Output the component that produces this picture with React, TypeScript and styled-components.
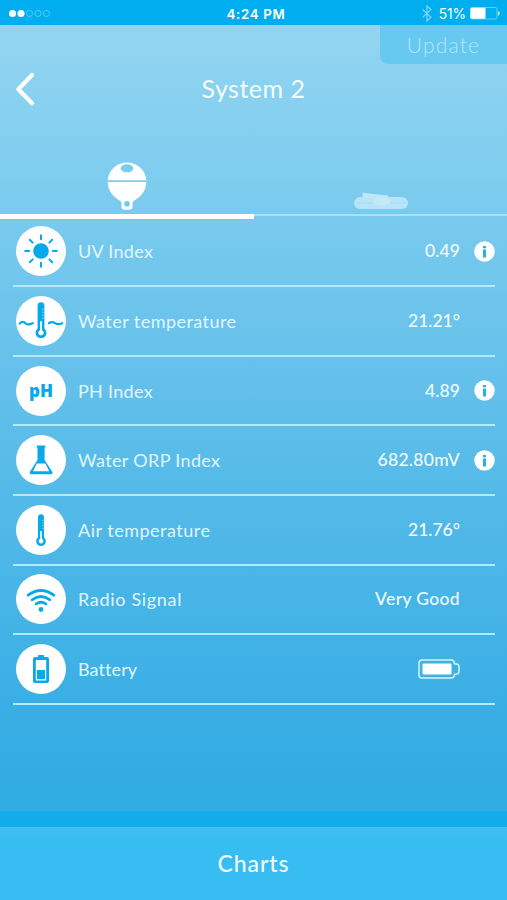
import React from "react";
import styled, { createGlobalStyle } from "styled-components";

const BLUE = "#08a9ea";

const GlobalStyle = createGlobalStyle`
  * { box-sizing: border-box; }
  body { margin: 0; font-family: Lato, "Open Sans", sans-serif; color: #fff; }
`;

const Screen = styled.main`
  width: 507px;
  height: 900px;
  display: flex;
  flex-direction: column;
  overflow: hidden;
  background: linear-gradient(#93d5f1 25px, #7bcbee 200px, #5abce9 450px, #3aafe5 700px, #30abe3 811px);
`;

const StatusBar = styled.header`
  height: 25px;
  flex: none;
  display: grid;
  grid-template-columns: 1fr auto 1fr;
  align-items: center;
  padding: 2px 7px 0 8px;
  background: #00aeef;
  font-family: Inter, sans-serif;
`;

const Clock = styled.span`
  font-size: 13.3px;
  font-weight: 600;
  letter-spacing: 0.7px;
  padding-left: 4px;
`;

const StatusRight = styled.div`
  display: flex;
  align-items: center;
  justify-content: flex-end;
  font-size: 13.8px;
  letter-spacing: -0.1px;
`;

const Percent = styled.span`
  margin: 0 4px 0 7px;
`;

const NavBar = styled.div`
  position: relative;
  height: 129px;
  flex: none;
  display: flex;
  align-items: flex-start;
  justify-content: center;
  padding-top: 46px;
`;

const Title = styled.h1`
  margin: 0;
  font-size: 25px;
  line-height: 34px;
  font-weight: 400;
  letter-spacing: 0.5px;
  color: #f3fcff;
`;

const BackButton = styled.button`
  position: absolute;
  left: 14px;
  top: 46px;
  padding: 0;
  border: 0;
  background: none;
  line-height: 0;
`;

const UpdateButton = styled.button`
  position: absolute;
  right: 0;
  top: 0;
  width: 127px;
  height: 39px;
  padding: 0;
  border: 0;
  border-radius: 0 0 0 8px;
  background: #67c9f0;
  color: #b4e7fa;
  font: 300 21px/36px Lato, sans-serif;
  letter-spacing: 1.2px;
`;

const Tabs = styled.nav`
  height: 65px;
  flex: none;
  display: grid;
  grid-template-columns: 254px 1fr;
`;

const Tab = styled.div<{ $active?: boolean }>`
  display: flex;
  align-items: flex-end;
  justify-content: center;
  height: ${(p) => (p.$active ? "65px" : "62px")};
  padding-bottom: ${(p) => (p.$active ? "4px" : "4px")};
  border-bottom: ${(p) => (p.$active ? "5px solid #fff" : "2px solid #a9e1f8")};
`;

const Readings = styled.ul`
  margin: -1.4px 12px 0 13px;
  padding: 0;
  list-style: none;
  flex: 1;
`;

const Reading = styled.li`
  height: 69.6px;
  display: grid;
  grid-template-columns: 50px 1fr auto 35px;
  align-items: center;
  padding-left: 3px;
  border-bottom: 2px solid #b5e9fd;
`;

const Disc = styled.div`
  width: 50px;
  height: 50px;
  border-radius: 50%;
  background: #fff;
  display: grid;
  place-items: center;
`;

const Label = styled.span<{ $spacing: number }>`
  padding-left: 12px;
  font-size: 18px;
  line-height: 26px;
  color: #e0f6ff;
  letter-spacing: ${(p) => p.$spacing}px;
`;

const Value = styled.span<{ $spacing: number }>`
  display: flex;
  font-size: 17.5px;
  line-height: 26px;
  font-weight: 500;
  color: #f0fbff;
  letter-spacing: ${(p) => p.$spacing}px;
`;

const InfoSlot = styled.span`
  display: flex;
  justify-content: flex-end;
`;

const PhText = styled.span`
  color: ${BLUE};
  font: 800 17px/22px "Open Sans", sans-serif;
  letter-spacing: 0;
`;

const ChartsButton = styled.button`
  height: 89px;
  flex: none;
  padding: 0;
  border: 0;
  border-top: 16px solid #13aceb;
  background: linear-gradient(#43bff1, #38bdf2 14px);
  color: #effcff;
  font: 500 23px/73px Lato, sans-serif;
  letter-spacing: 0.9px;
`;

const SignalDots = () => (
  <svg width="46" height="10" viewBox="0 0 46 10">
    {[4.5, 13, 21.5, 30, 38.5].map((x, i) => (
      <circle key={x} cx={x} cy="4.4" r={i < 2 ? 3.5 : 3.1} fill={i < 2 ? "#fff" : "none"}
        stroke={i < 2 ? "none" : "#56cbf6"} strokeWidth="1" />
    ))}
  </svg>
);

const Bluetooth = () => (
  <svg width="10" height="17" viewBox="0 0 10 17" fill="none" stroke="#7ed4f5" strokeWidth="1.2">
    <path d="M.7 4.7 9 12.300 5 16V1l4 3.600-8.300 7.700" />
  </svg>
);

const StatusBattery = () => (
  <svg width="30" height="13" viewBox="0 0 30 13">
    <rect x=".5" y=".5" width="26.5" height="11.5" rx="1.8" fill="none" stroke="#65cef6" />
    <rect x=".5" y=".8" width="15" height="11" rx="1" fill="#fff" />
    <path d="M28.200 4c1.800.8 1.800 4 0 4.800Z" fill="#fff" />
  </svg>
);

const BackIcon = () => (
  <svg width="22" height="36" viewBox="0 0 22 36" fill="none" stroke="#fff" strokeWidth="4.2" strokeLinecap="round" strokeLinejoin="round">
    <path d="M18 4 4.300 18.300 18 32.300" />
  </svg>
);

const Buoy = () => (
  <svg width="40" height="48" viewBox="0 0 40 48">
    <path fill="#fff" d="M20 .5C9.500.5 1.300 8.500.7 18.300h38.600C38.700 8.500 30.500.5 20 .5Z" />
    <path fill="#fff" d="M.7 20h38.600c-.2 8.500-5 14.500-11.600 18.200-2 1.200-2.200 2-2.200 3.600v3.200c0 1.800-1.200 2.800-3 2.800h-5c-1.800 0-3-1-3-2.800v-3.200c0-1.600-.2-2.400-2.200-3.600C5.700 34.500.900 28.500.7 20Z" />
    <ellipse cx="20" cy="6.300" rx="6.300" ry="4" fill="#7bcdee" />
    <circle cx="20" cy="41.800" r="2.800" fill="#6fc8ee" />
  </svg>
);

const Strap = () => (
  <svg width="54" height="18" viewBox="0 0 54 18">
    <rect y="5" width="54" height="12" rx="6" fill="#b7e4f8" />
    <path d="M8.500 5.500V.8L34 3.500l1 3Z" fill="#bde7f9" />
    <ellipse cx="28" cy="9.500" rx="9" ry="4" fill="#c4eafa" />
    <path d="M2 11h17m17 0h16" stroke="#9edaf4" strokeWidth=".8" />
  </svg>
);

const iconProps = { width: 50, height: 50, viewBox: "0 0 50 50" };

const Sun = () => (
  <svg {...iconProps} stroke={BLUE} strokeWidth="2" strokeLinecap="round">
    <circle cx="25" cy="25" r="7.800" fill={BLUE} stroke="none" />
    {[0, 45, 90, 135, 180, 225, 270, 315].map((a) => (
      <path key={a} d="M25 13.200V9.200" transform={`rotate(${a} 25 25)`} />
    ))}
  </svg>
);

const Thermometer = ({ water }: { water?: boolean }) => (
  <svg {...iconProps}>
    <g transform={water ? "translate(0 -.8)" : "translate(3 3) scale(.88)"}>
      <path fill={BLUE} d="M21.600 10.500a3.400 3.400 0 0 1 6.800 0v22.800a5.500 5.500 0 1 1-6.800 0Z" />
      <path fill="#fff" d="M24.100 26h1.800v9a2.700 2.700 0 1 1-1.800 0Z" />
      <path d="M26 14h2.400m-2.400 3h2.400m-2.400 3h2.400m-2.400 3h2.400" stroke="#8bd9f7" strokeWidth=".8" />
    </g>
    {water && (
      <path d="M3.800 27.500c2-2.300 4-2 6 0s4.500.8 7-.3M33 27.200c2.500-2 4-1.500 6 0s4.500 1.200 7.200 0" fill="none" stroke={BLUE} strokeWidth="2.200" strokeLinecap="round" />
    )}
  </svg>
);

const Flask = () => (
  <svg {...iconProps}>
    <path fill={BLUE} d="M20.800 10.500h8.600v2h-.8v12.500l7.500 11.500c1 1.700.3 2.700-1.500 2.700H15.500c-1.800 0-2.400-1-1.400-2.700L21.500 25V12.500h-.7Z" />
    <path fill="#fff" d="m20.800 28.500-3.800 7.800h16.200l-3.800-7.800Z" />
  </svg>
);

const Wifi = () => (
  <svg {...iconProps} fill="none" stroke={BLUE} strokeWidth="2.700" strokeLinecap="round">
    <path d="M12.200 21.200q12.800-9.400 25.600 0M16 25.800q9-6.600 18 0M20 30q5-3.500 10 0" />
    <circle cx="25" cy="35.500" r="2.400" fill={BLUE} stroke="none" />
  </svg>
);

const BatteryUpright = () => (
  <svg {...iconProps}>
    <path fill={BLUE} d="M22 13v-1.200q0-.8 1-.8h4q1 0 1 .8V13h3q2 0 2 2v22q0 2-2 2H19q-2 0-2-2V15q0-2 2-2Z" />
    <path fill="#fff" d="M19.800 16h10.400v20.500H19.800Z" />
    <path fill={BLUE} d="M21 26h8v9.200h-8Z" />
  </svg>
);

const BatteryLevel = () => (
  <svg width="42" height="20" viewBox="0 0 42 20">
    <path d="M4 1h29q3.500 0 3.500 3.800 4.500 0 4.500 2.700v5q0 2.800-4.500 2.800 0 3.700-3.500 3.700H4q-3 0-3-3V4q0-3 3-3Z" fill="none" stroke="#d7f5ff" strokeWidth="1.500" />
    <rect x="4.500" y="4.500" width="29" height="11" rx="1" fill="#fff" />
  </svg>
);

const Info = () => (
  <svg width="21" height="21" viewBox="0 0 21 21">
    <circle cx="10.500" cy="10.500" r="10.200" fill="#fff" />
    <path d="M9 8.600h3v7.900H9ZM9 4.900h3v2.400H9Z" fill="#25b4dc" />
  </svg>
);

interface Row {
  label: string;
  ls: number;
  icon: React.ReactNode;
  value: React.ReactNode;
  vs?: number;
  info?: boolean;
}

const rows: Row[] = [
  { label: "UV Index", ls: 0.3, icon: <Sun />, value: "0.49", vs: 0.1, info: true },
  { label: "Water temperature", ls: 0.45, icon: <Thermometer water />, value: "21.21°", vs: 0 },
  { label: "PH Index", ls: 0.3, icon: <PhText>pH</PhText>, value: "4.89", vs: 0.1, info: true },
  { label: "Water ORP Index", ls: 0.35, icon: <Flask />, value: "682.80mV", vs: 0.3, info: true },
  { label: "Air temperature", ls: 0.5, icon: <Thermometer />, value: "21.76°", vs: 0 },
  { label: "Radio Signal", ls: 0.68, icon: <Wifi />, value: "Very Good", vs: 0.35 },
  { label: "Battery", ls: 0.1, icon: <BatteryUpright />, value: <BatteryLevel /> },
];

export default function App() {
  return (
    <Screen>
      <GlobalStyle />
      <StatusBar>
        <SignalDots />
        <Clock>4:24 PM</Clock>
        <StatusRight>
          <Bluetooth />
          <Percent>51%</Percent>
          <StatusBattery />
        </StatusRight>
      </StatusBar>
      <NavBar>
        <BackButton aria-label="Back"><BackIcon /></BackButton>
        <Title>System 2</Title>
        <UpdateButton>Update</UpdateButton>
      </NavBar>
      <Tabs>
        <Tab $active><Buoy /></Tab>
        <Tab><Strap /></Tab>
      </Tabs>
      <Readings>
        {rows.map((r) => (
          <Reading key={r.label}>
            <Disc>{r.icon}</Disc>
            <Label $spacing={r.ls}>{r.label}</Label>
            <Value $spacing={r.vs ?? 0}>{r.value}</Value>
            <InfoSlot>{r.info && <Info />}</InfoSlot>
          </Reading>
        ))}
      </Readings>
      <ChartsButton>Charts</ChartsButton>
    </Screen>
  );
}
